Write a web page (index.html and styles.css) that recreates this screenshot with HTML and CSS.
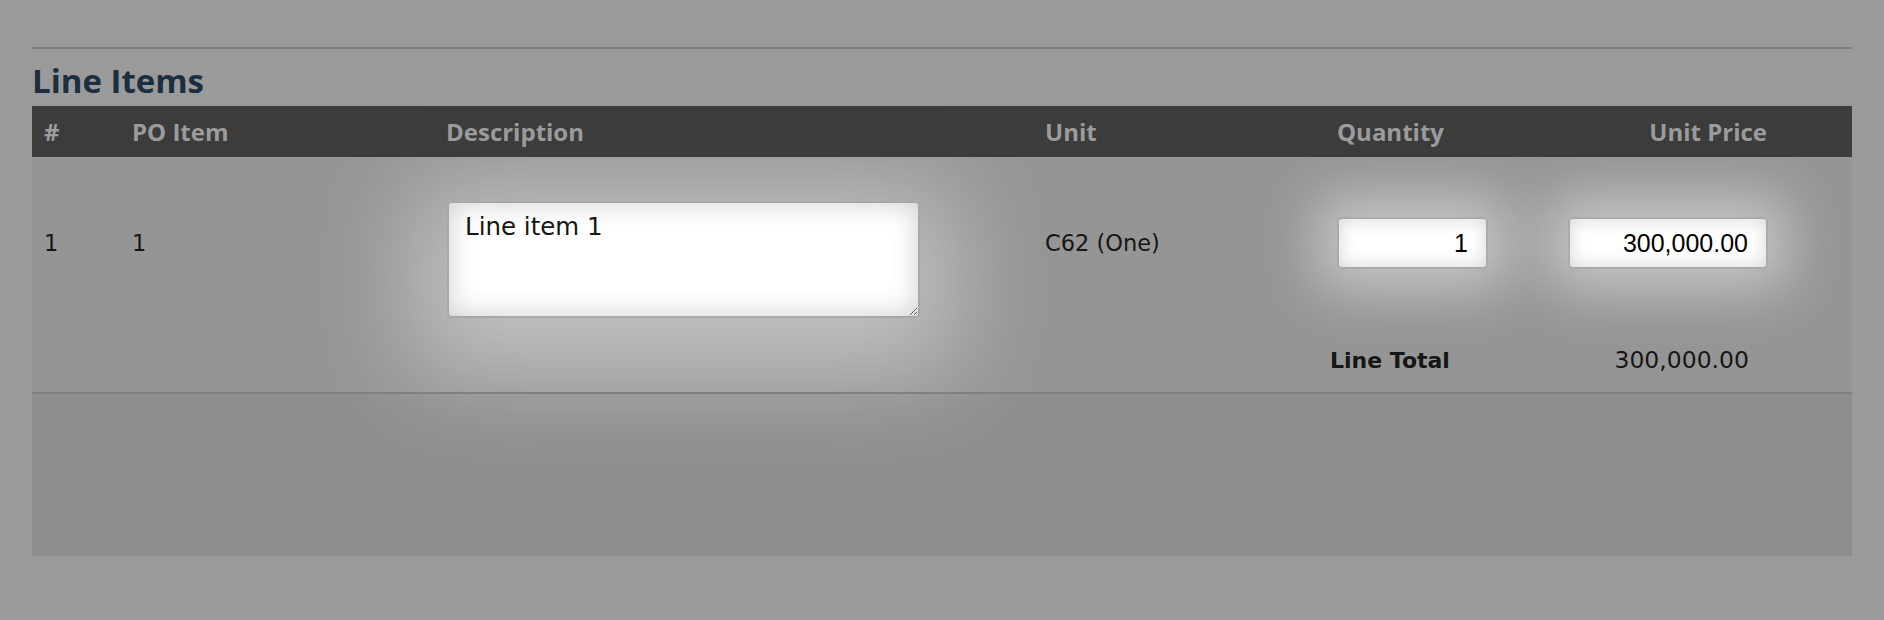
FILE: index.html
```html
<!DOCTYPE html>
<html lang="en">
<head>
  <meta charset="UTF-8" />
  <title>Line Items</title>
  <link rel="stylesheet" href="styles.css">
</head>
<body>
  <div class="page">
    <hr class="divider" />
    <h2 class="section-title">Line Items</h2>
    <div class="items">
      <table class="items-table">
        <thead>
          <tr>
            <th class="col-num">#</th>
            <th class="col-po">PO Item</th>
            <th class="col-desc">Description</th>
            <th class="col-unit">Unit</th>
            <th class="col-qty">Quantity</th>
            <th class="col-price">Unit Price</th>
          </tr>
        </thead>
        <tbody>
          <tr class="item-row">
            <td><div class="cell-text">1</div></td>
            <td><div class="cell-text">1</div></td>
            <td><textarea class="desc-input">Line item 1</textarea></td>
            <td><div class="cell-text">C62 (One)</div></td>
            <td><input type="text" class="qty-input" value="1" /></td>
            <td class="col-price"><input type="text" class="price-input" value="300,000.00" /></td>
          </tr>
          <tr class="total-row">
            <td></td>
            <td></td>
            <td></td>
            <td></td>
            <td class="total-label">Line Total</td>
            <td class="total-value">300,000.00</td>
          </tr>
        </tbody>
      </table>
    </div>
  </div>
</body>
</html>
```

FILE: styles.css
```css
html, body {
  margin: 0;
  background-color: #9a9a9a;
}
body {
  font-family: 'DejaVu Sans', Verdana, sans-serif;
  color: #161616;
}
.page {
  padding: 47px 32px 0;
}
.divider {
  border: none;
  border-top: 2px solid #7e7e7e;
  margin: 0;
}
.section-title {
  font-family: 'Open Sans', sans-serif;
  font-weight: bold;
  font-size: 33px;
  line-height: 38px;
  color: #1b2f40;
  margin: 13px 0 6px;
}
.items {
  height: 450px;
  background: linear-gradient(#959595 0, #959595 287px, #8e8e8e 287px);
}
.items-table {
  width: 100%;
  border-collapse: collapse;
  table-layout: fixed;
}
.items-table th {
  position: relative;
  z-index: 1;
  background-color: #3c3c3c;
  color: #9b9b9b;
  font-family: 'Open Sans', sans-serif;
  font-weight: bold;
  font-size: 24px;
  height: 51px;
  padding: 0 0 0 12px;
  text-align: left;
}
.col-num { width: 76px; }
.col-po { width: 302px; }
.col-desc { width: 587px; }
.col-unit { width: 280px; }
.col-qty { width: 218px; }
.items-table th.col-price {
  text-align: right;
  padding-right: 85px;
}
.item-row td {
  vertical-align: top;
  padding: 44px 0 10px 12px;
}
.item-row td.col-price {
  text-align: right;
  padding-right: 84px;
}
.cell-text {
  margin-top: 16px;
  height: 52px;
  line-height: 52px;
  font-size: 22.5px;
}
.desc-input {
  display: block;
  width: 473px;
  height: 117px;
  box-sizing: border-box;
  margin-left: 1px;
  padding: 9px 16px;
  font-family: 'DejaVu Sans', Verdana, sans-serif;
  font-size: 24.5px;
  color: #161616;
  background: #fff;
  border: 2px solid #a8a8a8;
  border-radius: 5px;
  box-shadow: inset 0 0 28px rgba(0, 0, 0, 0.2), 0 20px 100px 35px rgba(255, 255, 255, 0.42);
  resize: both;
  outline: none;
}
.qty-input, .price-input {
  box-sizing: border-box;
  height: 52px;
  margin-top: 16px;
  padding: 0 18px;
  font-family: 'Liberation Sans', Arial, sans-serif;
  font-size: 25px;
  color: #000;
  text-align: right;
  background: #fff;
  border: 2px solid #ababab;
  border-radius: 5px;
  box-shadow: inset 0 0 18px rgba(0, 0, 0, 0.17), 0 0 55px 20px rgba(255, 255, 255, 0.48);
  outline: none;
}
.qty-input {
  width: 151px;
}
.price-input {
  width: 200px;
}
.total-row td {
  height: 64px;
  font-size: 22px;
  padding: 0;
  border-bottom: 2px solid #808080;
}
.total-row td.total-label {
  font-weight: bold;
  padding-left: 5px;
}
.total-row td.total-value {
  font-size: 23.5px;
  text-align: right;
  padding-right: 103px;
}
```
